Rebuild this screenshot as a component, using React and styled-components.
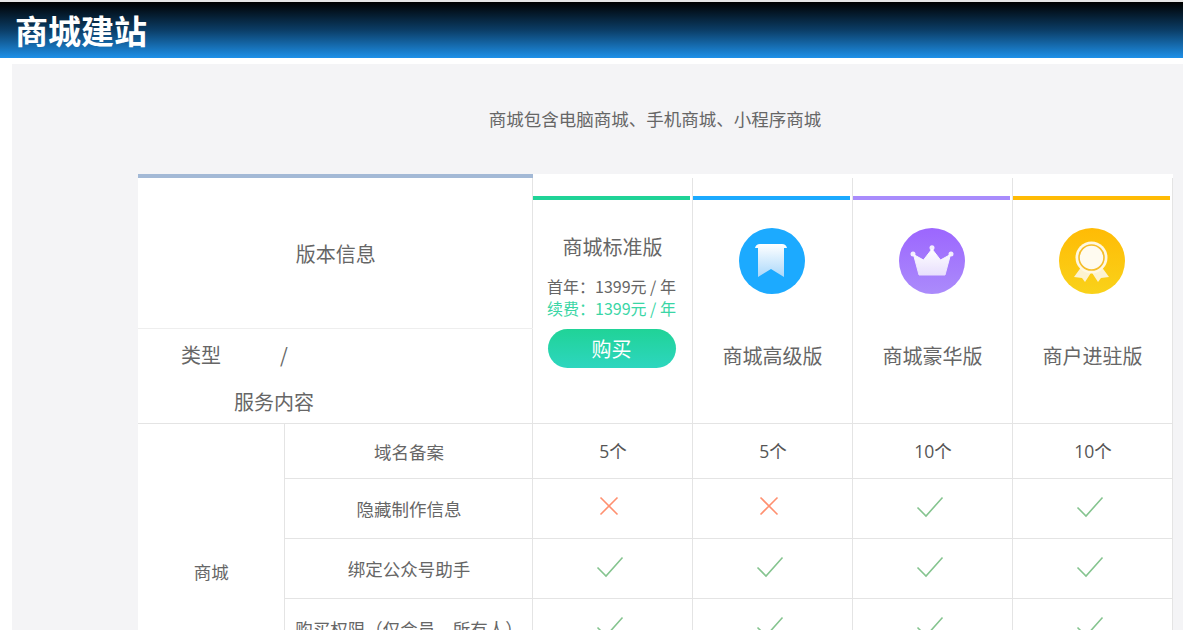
import React from "react";
import styled, { createGlobalStyle } from "styled-components";

const Global = createGlobalStyle`
  html { overflow: hidden; }
  body { margin: 0; background: #fff; color: #666; font-family: "Noto Sans CJK SC", "Noto Sans", sans-serif; font-weight: 400; }
`;
const Header = styled.header`
  height: 56px; margin-top: 2px; padding-left: 15px; display: flex; align-items: center;
  background: linear-gradient(180deg, #000 0%, #0b3d66 50%, #1e90e8 100%);
  box-shadow: 0 -2px 0 #e6e6e6;
`;
const Title = styled.h1`
  margin: 0; font-size: 33px; line-height: 56px; font-weight: 700; color: #fff;
`;
const Panel = styled.main`
  margin: 6px 0 0 12px; padding: 0 11px 40px 126px; background: #f4f4f6;
`;
const Subtitle = styled.p`
  margin: 0; height: 110px; padding-top: 43px; box-sizing: border-box; text-align: center;
  font-size: 17.5px; line-height: 24px; color: #666;
`;
const Table = styled.table`
  width: 1034px; table-layout: fixed; border-collapse: collapse; background: #fff;
`;
const InfoHead = styled.th`
  height: 148px; padding: 1px 0 0 2px; border-top: 4px solid #a3b9d6; border-bottom: 1px solid #eee;
  font-size: 20px; font-weight: 400; text-align: center; vertical-align: middle;
`;
const TypeHead = styled.th`
  height: 93px; padding: 0; font-size: 20px; font-weight: 400; border-bottom: 1px solid #e4e4e4;
  text-align: left; vertical-align: top;
`;
const TypeLine = styled.div`
  display: flex; justify-content: flex-start; height: 47px; line-height: 52px;
  padding-left: ${p => p.$indent}px; gap: 59px;
`;
const PlanHead = styled.th`
  padding: 18px 0 0; border-top: 4px solid #fff; border-left: 1px solid #e4e4e4; border-right: 1px solid #e4e4e4; border-bottom: 1px solid #e4e4e4;
  vertical-align: top; font-weight: 400; text-align: center;
`;
const Bar = styled.div`
  height: 4px; margin-right: 2px; background: ${p => p.$color};
`;
const PlanBody = styled.div`
  height: 223px; padding: 28px 16px 0 15px; box-sizing: border-box; display: flex; flex-direction: column; align-items: center;
`;
const PlanName = styled.div`
  font-size: 20px; line-height: 28px; white-space: nowrap; color: #666; padding-left: 2px;
  margin-top: ${p => p.$top}px;
`;
const Price = styled.div`
  font-size: 16px; line-height: 22px; white-space: nowrap; color: ${p => p.$color};
  margin-top: ${p => p.$top}px;
`;
const BuyButton = styled.button`
  width: 128px; height: 39px; margin-top: 10px; border: 0; border-radius: 20px; padding: 0;
  background: linear-gradient(180deg, #20d397, #2dd6bf); color: #fff;
  font: 400 20px "Noto Sans CJK SC", sans-serif;
`;
const GroupCell = styled.td`
  font-size: 17.5px; text-align: center; border-right: 1px solid #e4e4e4; vertical-align: middle; padding: 0 0 0 1px;
`;
const NameCell = styled.td`
  height: ${p => p.$h}px; padding: 0 0 0 2px; font-size: 17.5px; text-align: center;
  border-right: 1px solid #e4e4e4; border-bottom: 1px solid #e4e4e4; white-space: nowrap;
`;
const ValueCell = styled.td`
  padding: 0 ${p => p.$right}px ${p => p.$bottom}px ${p => p.$left}px; font-size: 17.5px; color: #555; text-align: center; vertical-align: middle;
  border-left: 1px solid #e4e4e4; border-right: 1px solid #e4e4e4; border-bottom: 1px solid #e4e4e4;
  font-family: "Open Sans", "Noto Sans CJK SC", sans-serif;
`;
const Mark = styled.svg`
  display: block; margin: ${p => p.$top}px auto 0;
`;

const Check = () => (
  <Mark $top={-4} width="28" height="22" viewBox="0 0 28 22" fill="none">
    <path d="M1.5 11.5 L10 20 L26.5 1.5" stroke="#85c48f" strokeWidth="1.6" />
  </Mark>
);
const Cross = () => (
  <Mark $top={-6} width="20" height="20" viewBox="0 0 20 20" fill="none">
    <path d="M1.5 1.5 L18.5 18.5 M18.5 1.5 L1.5 18.5" stroke="#ff9070" strokeWidth="1.6" />
  </Mark>
);

const Ribbon = () => (
  <svg width="66" height="66" viewBox="0 0 66 66">
    <defs><linearGradient id="rb" x1="0" y1="0" x2="0" y2="1"><stop offset="0" stopColor="#fff" /><stop offset="1" stopColor="#aad8fb" /></linearGradient></defs>
    <circle cx="33" cy="33" r="33" fill="#1caaff" />
    <path d="M16 20 Q17 16 21 16 L43 16 Q47 16 48 20 L45 20 L45 49 L32 41 L19 49 L19 20 Z" fill="url(#rb)" />
  </svg>
);
const Crown = () => (
  <svg width="66" height="66" viewBox="0 0 66 66">
    <defs>
      <linearGradient id="cb" x1="0" y1="0" x2="0" y2="1"><stop offset="0" stopColor="#9c66fe" /><stop offset="1" stopColor="#ab8bfb" /></linearGradient>
      <linearGradient id="cw" x1="0" y1="0" x2="0" y2="1"><stop offset="0" stopColor="#fff" /><stop offset="1" stopColor="#e8dffd" /></linearGradient>
    </defs>
    <circle cx="33" cy="33" r="33" fill="url(#cb)" />
    <circle cx="33" cy="19.7" r="2.5" fill="#f3edfe" />
    <circle cx="14" cy="26" r="2.5" fill="#f3edfe" />
    <circle cx="52" cy="26" r="2.5" fill="#f3edfe" />
    <path d="M33 21 L41.5 32 L51.5 26.5 L46 47 L20 47 L14.5 26.5 L24.5 32 Z" fill="url(#cw)" stroke="url(#cw)" strokeLinejoin="round" />
  </svg>
);
const Medal = () => (
  <svg width="66" height="66" viewBox="0 0 66 66">
    <defs><linearGradient id="mb" x1="0" y1="0" x2="0" y2="1"><stop offset="0" stopColor="#ffbb05" /><stop offset="1" stopColor="#f9d21a" /></linearGradient></defs>
    <circle cx="33" cy="33" r="33" fill="url(#mb)" />
    <path d="M23 38 L15 49 L23 50 L26 54 L32.5 44 L39 54 L42 50 L50 49 L42 38 Z" fill="#fdf3cf" />
    <circle cx="32.5" cy="29.5" r="16" fill="#fff8e2" />
    <circle cx="32.5" cy="29.5" r="12.5" fill="#fffbf0" stroke="#f5bd2a" strokeWidth="1.6" />
  </svg>
);

const plans = [
  { color: "#20d397" },
  { color: "#1caaff", name: "商城高级版", Icon: Ribbon },
  { color: "#a98cfc", name: "商城豪华版", Icon: Crown },
  { color: "#ffbb05", name: "商户进驻版", Icon: Medal },
];

const rows = [
  { name: "域名备案", h: 54, values: ["5个", "5个", "10个", "10个"] },
  { name: "隐藏制作信息", h: 59, values: [0, 0, 1, 1] },
  { name: "绑定公众号助手", h: 59, values: [1, 1, 1, 1] },
  { name: "购买权限（仅会员、所有人）", h: 59, values: [1, 1, 1, 1] },
  { name: "商品管理", h: 59, values: [1, 1, 1, 1] },
];

const cellPad = v => {
  if (v === 1) return { $right: 5, $left: 0, $bottom: 0 };
  if (v === 0) return { $right: 6, $left: 0, $bottom: 0 };
  return { $right: 0, $left: 2, $bottom: 2 };
};
const Value = ({ v }) => (v === 1 ? <Check /> : v === 0 ? <Cross /> : v);

export default function App() {
  return (
    <>
      <Global />
      <Header><Title>商城建站</Title></Header>
      <Panel>
        <Subtitle>商城包含电脑商城、手机商城、小程序商城</Subtitle>
        <Table>
          <colgroup>
            <col style={{ width: 146 }} /><col style={{ width: 248 }} />
            <col style={{ width: 160 }} /><col style={{ width: 160 }} /><col style={{ width: 160 }} /><col style={{ width: 160 }} />
          </colgroup>
          <thead>
            <tr>
              <InfoHead colSpan={2}>版本信息</InfoHead>
              {plans.map(p => (
                <PlanHead key={p.color} rowSpan={2}>
                  <Bar $color={p.color} />
                  <PlanBody>
                    {p.Icon ? (
                      <>
                        <p.Icon />
                        <PlanName $top={48}>{p.name}</PlanName>
                      </>
                    ) : (
                      <>
                        <PlanName $top={5}>商城标准版</PlanName>
                        <Price $top={14} $color="#666">首年：1399元 / 年</Price>
                        <Price $top={0} $color="#3ad6a5">续费：1399元 / 年</Price>
                        <BuyButton>购买</BuyButton>
                      </>
                    )}
                  </PlanBody>
                </PlanHead>
              ))}
            </tr>
            <tr>
              <TypeHead colSpan={2}>
                <TypeLine $indent={43}><span>类型</span><span>/</span></TypeLine>
                <TypeLine $indent={96}><span>服务内容</span></TypeLine>
              </TypeHead>
            </tr>
          </thead>
          <tbody>
            {rows.map((r, i) => (
              <tr key={r.name}>
                {i === 0 && <GroupCell rowSpan={rows.length}>商城</GroupCell>}
                <NameCell $h={r.h}>{r.name}</NameCell>
                {r.values.map((v, j) => <ValueCell key={j} {...cellPad(v)}><Value v={v} /></ValueCell>)}
              </tr>
            ))}
          </tbody>
        </Table>
      </Panel>
    </>
  );
}
